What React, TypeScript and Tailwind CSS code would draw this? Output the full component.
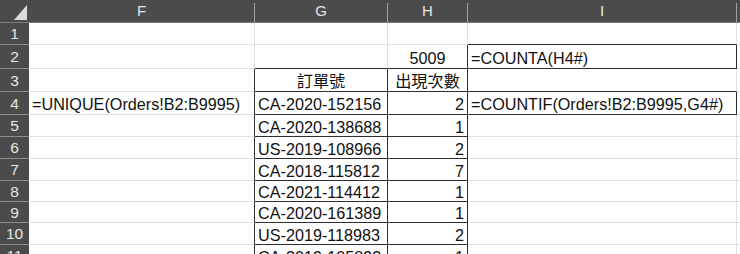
import React from "react";

type Align = "left" | "center" | "right";

interface Cell {
  text?: string;
  align?: Align;
}

const COLS = ["F", "G", "H", "I", ""];

// rows 1..11, cells keyed by column letter
const ROWS: Record<string, Cell>[] = [
  {},
  { H: { text: "5009", align: "center" }, I: { text: "=COUNTA(H4#)" } },
  { G: { text: "訂單號", align: "center" }, H: { text: "出現次數", align: "center" } },
  {
    F: { text: "=UNIQUE(Orders!B2:B9995)" },
    G: { text: "CA-2020-152156" },
    H: { text: "2", align: "right" },
    I: { text: "=COUNTIF(Orders!B2:B9995,G4#)" },
  },
  { G: { text: "CA-2020-138688" }, H: { text: "1", align: "right" } },
  { G: { text: "US-2019-108966" }, H: { text: "2", align: "right" } },
  { G: { text: "CA-2018-115812" }, H: { text: "7", align: "right" } },
  { G: { text: "CA-2021-114412" }, H: { text: "1", align: "right" } },
  { G: { text: "CA-2020-161389" }, H: { text: "1", align: "right" } },
  { G: { text: "US-2019-118983" }, H: { text: "2", align: "right" } },
  { G: { text: "CA-2019-105893" }, H: { text: "1", align: "right" } },
];

// which edges get the dark cell border instead of the gridline
const darkRight = (r: number, c: string) =>
  (c === "F" && r >= 3) ||
  (c === "G" && r >= 3) ||
  (c === "H" && r >= 2) ||
  (c === "I" && (r === 2 || r === 4));

const darkBottom = (r: number, c: string) =>
  ((c === "G" || c === "H") && r >= 2) || (c === "I" && r <= 4);

const alignClass: Record<Align, string> = {
  left: "justify-start pl-[3px]",
  center: "justify-center",
  right: "justify-end pr-[3px]",
};

const HeaderCell = ({ label }: { label: string }) => (
  <div className="flex bg-[#4b4b4b] border-b border-[#7d7d7d]">
    <div className="flex-1 flex items-center justify-center text-[15px] text-[#e6e6e6] pt-px">
      {label}
    </div>
    <div className="w-px h-[19px] self-end bg-[#a3a3a3]" />
  </div>
);

export default function App() {
  return (
    <div
      className="w-[740px] h-[254px] overflow-hidden bg-white grid grid-cols-[29px_226px_133px_80px_269px_1fr] grid-rows-[23px_22px_24px_23px_23px_22px_22px_22px_21px_21px_22px_22px]"
      style={{ fontFamily: '"Liberation Sans", Arial, "Noto Sans CJK TC", sans-serif' }}
    >
      {/* corner */}
      <div className="bg-[#4b4b4b] border-b border-[#7d7d7d] flex items-start justify-end pr-px pt-[5px]">
        <svg width="14" height="15" viewBox="0 0 14 15">
          <polygon points="13,0 13,15 0,15" fill="#dcdcdc" />
        </svg>
      </div>
      {COLS.map((c, i) => (
        <HeaderCell key={i} label={c} />
      ))}

      {ROWS.map((row, idx) => {
        const r = idx + 1;
        return (
          <React.Fragment key={r}>
            <div className="bg-[#4b4b4b] border-b border-[#8e8e8e] flex items-center justify-center text-[15.5px] text-[#e6e6e6] pt-px">
              {r}
            </div>
            {COLS.map((c, ci) => {
              const cell = row[c];
              const right = darkRight(r, c) ? "border-r-[#2e2e2e]" : "border-r-[#e1e1e1]";
              const bottom = darkBottom(r, c) ? "border-b-[#2e2e2e]" : "border-b-[#e1e1e1]";
              return (
                <div
                  key={ci}
                  className={`flex items-center pt-[3px] whitespace-nowrap overflow-visible border-r border-b text-[16.2px] text-[#111] leading-none ${right} ${bottom} ${
                    alignClass[cell?.align ?? "left"]
                  } ${c === "F" ? "relative z-10" : ""}`}
                >
                  {cell?.text}
                </div>
              );
            })}
          </React.Fragment>
        );
      })}
    </div>
  );
}
